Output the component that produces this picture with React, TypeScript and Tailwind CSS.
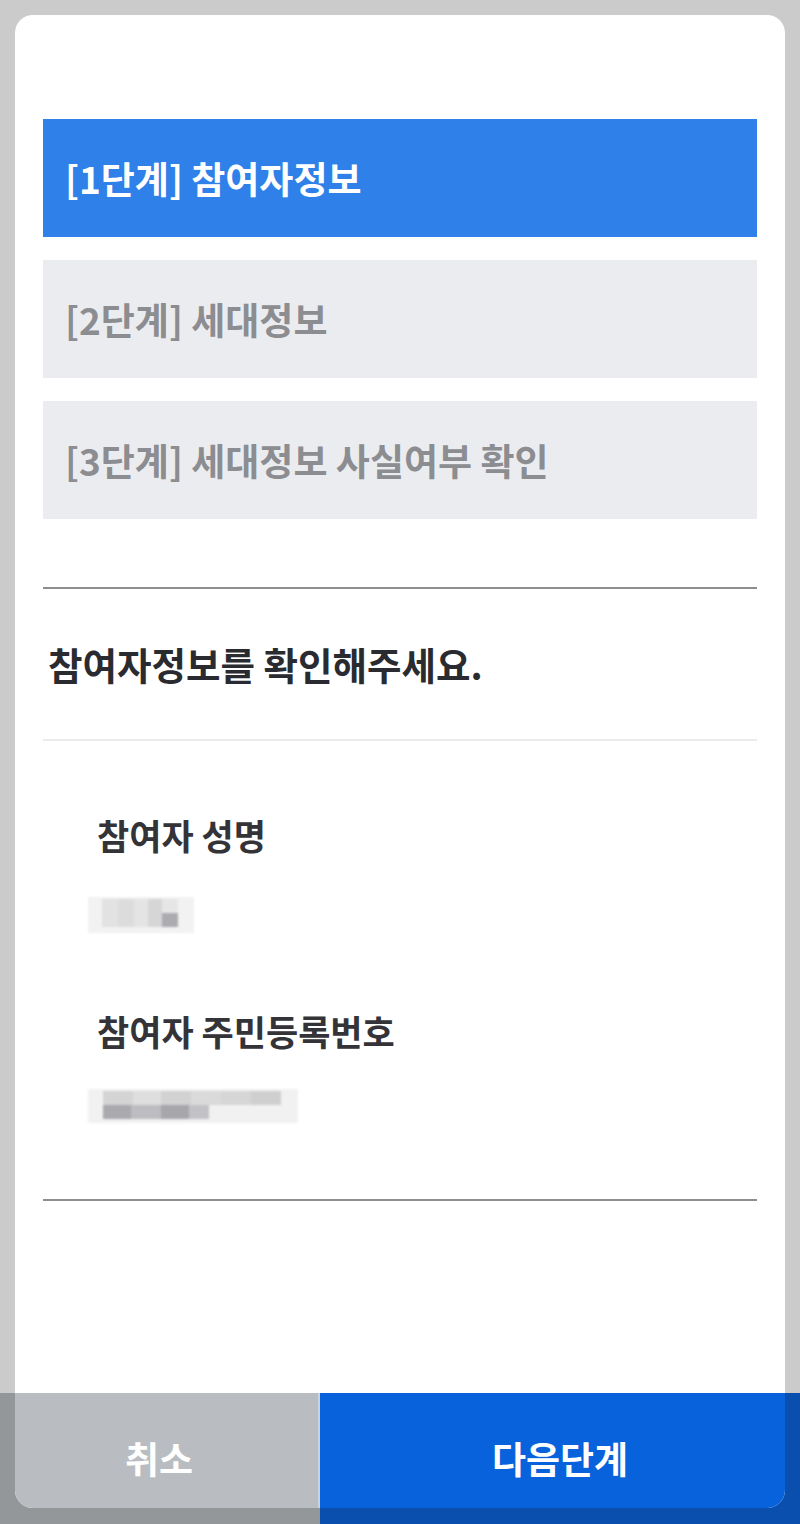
import React from "react";

const font = { fontFamily: '"Noto Sans CJK KR", "Noto Sans", sans-serif' };

function NameMosaic() {
  return (
    <svg width="110" height="40" viewBox="0 0 110 40" style={{ filter: "blur(1.2px)" }}>
      <rect x="0" y="2" width="106" height="36" fill="#f2f2f2" />
      <rect x="14" y="4" width="16" height="28" fill="#e2e2e2" />
      <rect x="30" y="4" width="16" height="28" fill="#dcdcdc" />
      <rect x="46" y="4" width="14" height="28" fill="#e4e4e4" />
      <rect x="60" y="4" width="14" height="28" fill="#d6d6d6" />
      <rect x="74" y="4" width="16" height="14" fill="#e6e6e6" />
      <rect x="74" y="18" width="16" height="14" fill="#ababb0" />
    </svg>
  );
}

function RrnMosaic() {
  return (
    <svg width="212" height="40" viewBox="0 0 212 40" style={{ filter: "blur(1.2px)" }}>
      <rect x="0" y="2" width="210" height="34" fill="#f1f1f1" />
      <rect x="15" y="4" width="30" height="14" fill="#d4d4d4" />
      <rect x="45" y="4" width="28" height="14" fill="#dedede" />
      <rect x="73" y="4" width="30" height="14" fill="#d2d2d2" />
      <rect x="103" y="4" width="30" height="14" fill="#dadada" />
      <rect x="133" y="4" width="30" height="14" fill="#d6d6d6" />
      <rect x="163" y="4" width="30" height="14" fill="#cfcfcf" />
      <rect x="15" y="18" width="28" height="14" fill="#a9a9ae" />
      <rect x="43" y="18" width="30" height="14" fill="#bdbdc1" />
      <rect x="73" y="18" width="28" height="14" fill="#a6a6ab" />
      <rect x="101" y="18" width="20" height="14" fill="#c2c2c6" />
    </svg>
  );
}

export default function App() {
  return (
    <div className="relative w-[800px] h-[1524px] bg-[#cbcbcb] overflow-hidden" style={font}>
      <div className="absolute left-0 bottom-0 w-full h-[131px] flex">
        <div className="w-[320px] bg-[#949799]" />
        <div className="flex-1 bg-[#0a4fae]" />
      </div>

      <div className="absolute left-[15px] top-[15px] w-[770px] h-[1493px] rounded-[18px] bg-white overflow-hidden flex flex-col">
        <div className="px-[28px] pt-[104px] flex flex-col">
          <div className="flex flex-col gap-[23px]">
            <div className="h-[118px] bg-[#2f80e8] flex items-center pl-[22px]">
              <span className="text-[37px] font-bold text-white leading-none">[1단계] 참여자정보</span>
            </div>
            <div className="h-[118px] bg-[#ebecef] flex items-center pl-[22px]">
              <span className="text-[37px] font-bold text-[#8b8d91] leading-none">[2단계] 세대정보</span>
            </div>
            <div className="h-[118px] bg-[#ebecef] flex items-center pl-[22px]">
              <span className="text-[37px] font-bold text-[#8b8d91] leading-none">[3단계] 세대정보 사실여부 확인</span>
            </div>
          </div>

          <div className="mt-[68px] h-[2px] bg-[#8e8e8e]" />
          <div className="h-[150px] flex items-center pl-[5px]">
            <span className="text-[37.5px] font-bold text-[#2a2b30] leading-none">참여자정보를 확인해주세요.</span>
          </div>
          <div className="h-[2px] bg-[#ebebeb]" />

          <div className="pl-[54px] mt-[74px] h-[38px] flex items-center">
            <span className="text-[35px] font-bold text-[#333338] leading-none">참여자 성명</span>
          </div>
          <div className="pl-[45px] mt-[42px] h-[40px]">
            <NameMosaic />
          </div>

          <div className="pl-[54px] mt-[76px] h-[38px] flex items-center">
            <span className="text-[35px] font-bold text-[#333338] leading-none">참여자 주민등록번호</span>
          </div>
          <div className="pl-[45px] mt-[38px] h-[40px]">
            <RrnMosaic />
          </div>

          <div className="mt-[72px] h-[2px] bg-[#8e8e8e]" />
        </div>

        <div className="mt-auto -mx-[15px] -mb-[16px] w-[800px] h-[131px] shrink-0 flex">
          <div className="w-[320px] bg-[#b9bdc1] border-r-[2px] border-[#c9d3de] flex items-center justify-center">
            <span className="text-[37px] font-bold text-white leading-none">취소</span>
          </div>
          <div className="flex-1 bg-[#0862db] flex items-center justify-center">
            <span className="text-[37px] font-bold text-white leading-none">다음단계</span>
          </div>
        </div>
      </div>
    </div>
  );
}
